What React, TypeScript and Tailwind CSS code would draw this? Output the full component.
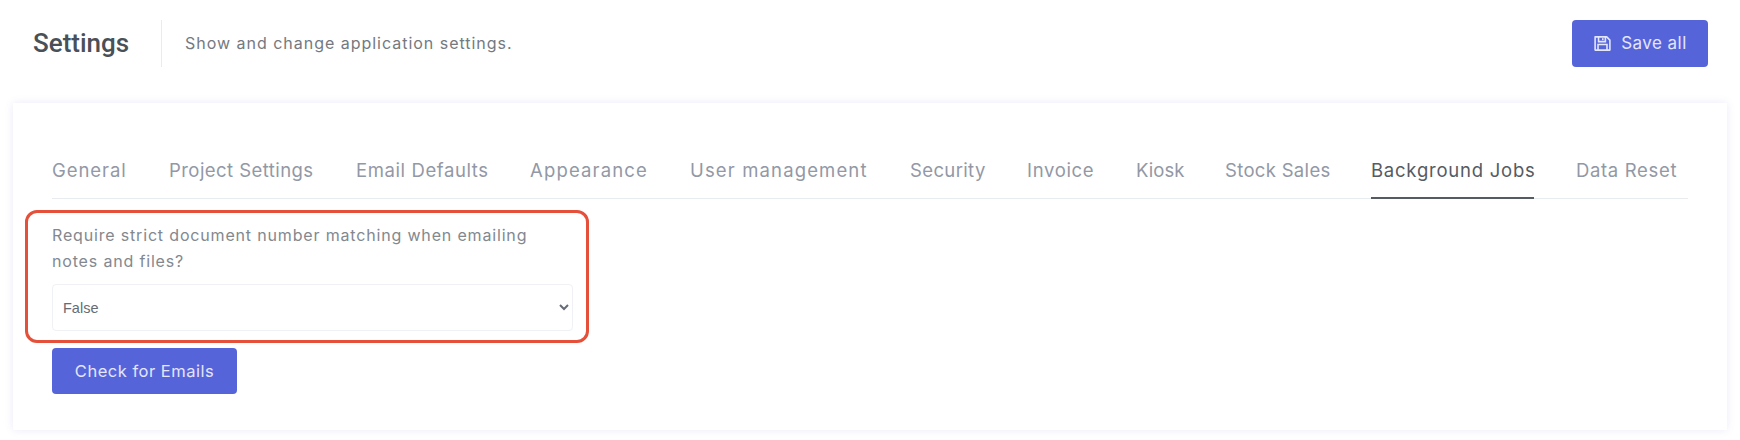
const tabs = [
  { label: "General", style: "w-[75px] tracking-[0.93px]" },
  { label: "Project Settings", style: "w-[145px] tracking-[0.44px]" },
  { label: "Email Defaults", style: "w-[132px] tracking-[0.6px]" },
  { label: "Appearance", style: "w-[118px] tracking-[1.16px]" },
  { label: "User management", style: "w-[178px] tracking-[1.14px]" },
  { label: "Security", style: "w-[75px] tracking-[0.37px]" },
  { label: "Invoice", style: "w-[67px] tracking-[0.67px]" },
  { label: "Kiosk", style: "w-[47px] tracking-[0.05px]" },
  { label: "Stock Sales", style: "w-[104px] tracking-[0.32px]" },
  { label: "Background Jobs", style: "w-[163px] tracking-[0.77px]" },
  { label: "Data Reset", style: "w-[101px] tracking-[0.66px]" },
]

const ACTIVE_TAB = "Background Jobs"

function SaveIcon() {
  return (
    <svg viewBox="0 0 18 18" className="w-[19px] h-[19px]" fill="none" stroke="currentColor" strokeWidth="1.5">
      <path d="M2 2.75h11l3 3v9.5h-14z" strokeLinejoin="round" />
      <path d="M5.25 2.75v4.5h6.5v-4.5" />
      <path d="M9.25 4v1.8" />
      <path d="M4.75 15.25v-5.25h8.5v5.25" />
    </svg>
  )
}

export default function App() {
  return (
    <div className="w-[1740px] h-[440px] overflow-hidden bg-white font-['Inter','Liberation_Sans',sans-serif]">
      <header className="flex items-center justify-between pt-5 pl-[33px] pr-8">
        <div className="flex items-center h-[47px]">
          <h1 className="w-[128px] font-['Roboto',sans-serif] text-[26px] font-medium text-[#495057]">Settings</h1>
          <div className="w-px h-[47px] bg-[#e9ecef]" />
          <p className="ml-[23px] mb-[2px] text-[16px] tracking-[0.98px] text-[#74797f]">Show and change application settings.</p>
        </div>
        <button className="flex items-center justify-center gap-[9px] w-[136px] h-[47px] rounded-[4px] bg-[#5664d9] text-[17px] tracking-[0.45px] text-[#e4e6fa]">
          <SaveIcon />
          Save all
        </button>
      </header>

      <main className="relative mt-9 ml-[13px] w-[1714px] h-[327px] bg-white pt-[39px] pl-[39px] pr-[39px] shadow-[0_0_8px_rgba(90,100,200,0.13)]">
        <nav className="flex gap-[42px] w-[1636px] h-[57px] border-b border-[#e9ecef]">
          {tabs.map((tab) => (
            <div
              key={tab.label}
              className={
                tab.label === ACTIVE_TAB
                  ? `${tab.style} h-[57px] leading-[56px] whitespace-nowrap text-[18.5px] text-[#555b63] border-b-2 border-[#555b63]`
                  : `${tab.style} h-[57px] leading-[56px] whitespace-nowrap text-[18.5px] text-[#9298a6]`
              }
            >
              {tab.label}
            </div>
          ))}
        </nav>

        <label className="block w-[521px] mt-[23px] text-[16px] leading-[26px] tracking-[0.83px] text-[#83888f]">
          Require strict document number matching when emailing notes and files?
        </label>
        <select className="block mt-[10px] w-[521px] h-[47px] pl-[6px] pr-1 rounded-[4px] border border-[#eff1f4] bg-white font-['Liberation_Sans',sans-serif] text-[14.5px] text-[#666c74]">
          <option>False</option>
        </select>
        <button className="block mt-[17px] w-[185px] h-[46px] rounded-[4px] bg-[#5664d9] text-[16.5px] tracking-[0.5px] text-[#e4e6fa]">
          Check for Emails
        </button>

        {/* annotation box drawn over the form */}
        <div className="absolute left-[12px] top-[107px] w-[564px] h-[133px] rounded-[12px] border-[3px] border-[#e4503a] pointer-events-none" />
      </main>
    </div>
  )
}
